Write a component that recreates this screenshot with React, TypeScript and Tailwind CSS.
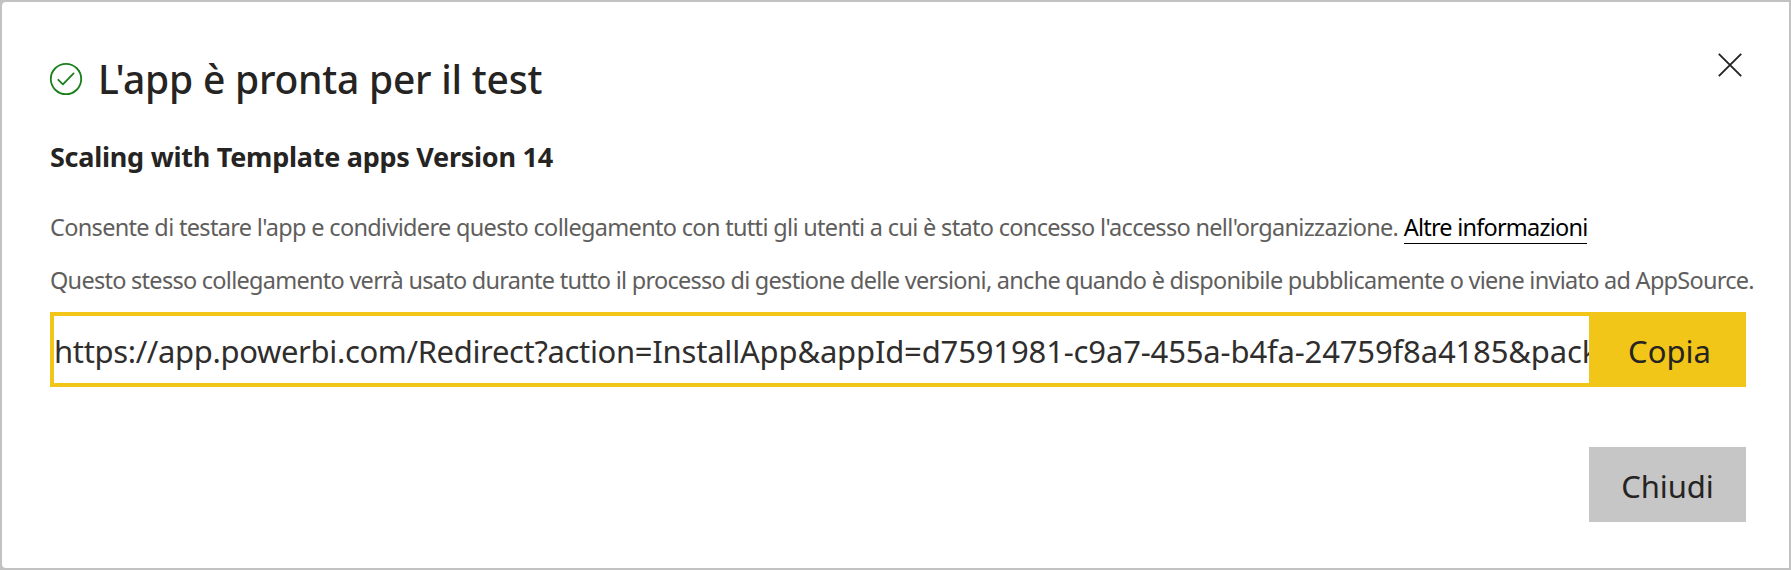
function CheckCircle() {
  return (
    <svg width="34" height="34" viewBox="0 0 34 34" fill="none" stroke="#1a7f1a" strokeWidth="1.8" strokeLinecap="round" strokeLinejoin="round">
      <circle cx="17" cy="17" r="15.2" />
      <path d="M9.3 17.8 13.9 22.3 24.6 11.4" />
    </svg>
  );
}

function CloseIcon() {
  return (
    <svg width="24" height="24" viewBox="0 0 24 24" fill="none" stroke="#252423" strokeWidth="1.9">
      <path d="M.8.8 23.2 23.2M23.2.8.8 23.2" />
    </svg>
  );
}

export default function App() {
  return (
    <div className="h-[570px] w-[1791px] bg-[#c2c2c2] p-[2px] font-['Noto_Sans','Open_Sans',sans-serif] text-[#252423]">
      <div className="flex h-full flex-col rounded-l-[4px] bg-white pt-[51px] pr-[43px] pl-[48px]">
        <header className="flex items-start justify-between">
          <div className="-ml-px flex h-[52px] items-center gap-[15px]">
            <CheckCircle />
            <h1 className="text-[39px] leading-[52px] font-medium tracking-[-0.22px] whitespace-nowrap">L'app è pronta per il test</h1>
          </div>
          <button type="button" aria-label="Chiudi" className="mr-[4px]">
            <CloseIcon />
          </button>
        </header>

        <h2 className="mt-[34px] text-[27px] leading-[36px] font-bold tracking-[-0.26px] whitespace-nowrap">Scaling with Template apps Version 14</h2>

        <div className="mt-[26px] text-[23.5px] leading-[53px] whitespace-nowrap text-[#605e5c]">
          <p className="tracking-[-0.68px]">
            Consente di testare l'app e condividere questo collegamento con tutti gli utenti a cui è stato concesso l'accesso nell'organizzazione.{" "}
            <a href="#" className="border-b-[1.5px] border-black tracking-[-0.78px] text-black">Altre informazioni</a>
          </p>
          <p className="tracking-[-0.73px]">
            Questo stesso collegamento verrà usato durante tutto il processo di gestione delle versioni, anche quando è disponibile pubblicamente o viene inviato ad AppSource.
          </p>
        </div>

        <div className="mt-[5px] flex h-[75px] shrink-0 text-[31px]">
          <div className="flex min-w-0 flex-1 items-center overflow-hidden border-4 border-r-0 border-[#f2c618] pt-[3px] whitespace-nowrap text-[#2f2e2d]">
            <p>
              <span className="tracking-[-0.35px]">https://app.powerbi.com/Redirect?action=</span>
              <span className="tracking-[-0.18px]">InstallApp&amp;appId=</span>
              <span className="tracking-[-0.14px]">d7591981-c9a7-455a-b4fa-24759f8a4185&amp;pack</span>
            </p>
          </div>
          <button type="button" className="w-[157px] shrink-0 bg-[#f2c618] pt-[3px] pl-[4px]">Copia</button>
        </div>

        <div className="mt-[60px] flex justify-end">
          <button type="button" className="h-[75px] w-[157px] bg-[#c6c6c6] pt-[3px] text-[31px] tracking-[-0.1px]">Chiudi</button>
        </div>
      </div>
    </div>
  );
}
